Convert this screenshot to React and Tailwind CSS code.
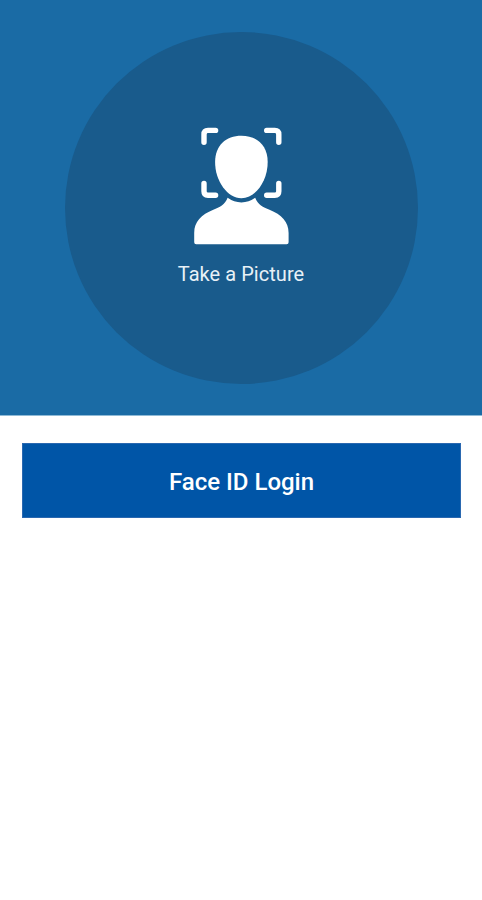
import React from "react";

/* Person silhouette inside four scan corners. */
function FaceScanIcon({ className }) {
  return (
    <svg viewBox="0 0 96 118" className={className} fill="currentColor" aria-hidden="true">
      <g fill="none" stroke="currentColor" strokeWidth="5.4" strokeLinecap="round" strokeLinejoin="round">
        <path d="M11 15.3V7.4Q11 3.4 15 3.4H22.6" />
        <path d="M73.7 3.4H81.8Q85.8 3.4 85.8 7.4V15.3" />
        <path d="M11 56.4V64.3Q11 68.3 15 68.3H22.6" />
        <path d="M73.7 68.3H81.8Q85.8 68.3 85.8 64.3V56.4" />
      </g>
      <path d="M48.4 8.7C64 8.7 74.7 18.5 74.7 35C74.7 54 62.5 71.2 48.4 71.2C34.3 71.2 22.1 54 22.1 35C22.1 18.5 32.8 8.7 48.4 8.7Z" />
      <path d="M34.6 70.8Q41 75.4 48.4 75.4Q55.8 75.4 62.2 70.8C65 78 70 80.2 76.5 82.8C88.5 87.8 95.6 94.5 95.6 106V115.3Q95.6 117.3 93.6 117.3H3.2Q1.2 117.3 1.2 115.3V106C1.2 94.5 8.3 87.8 20.3 82.8C26.8 80.2 31.8 78 34.6 70.8Z" />
    </svg>
  );
}

export default function App() {
  return (
    <div className="min-h-screen bg-white font-['Roboto',sans-serif]">
      <div className="flex h-[416px] justify-center border-b border-[#8fbad6] bg-[#1a6ba5] pt-8">
        <button className="flex h-[352px] w-[353px] flex-col items-center rounded-full bg-[#195b8c] pt-[95px] text-white">
          <FaceScanIcon className="h-[118px] w-24 shrink-0" />
          <span className="mt-[15px] text-xl leading-7 tracking-[0.04px] text-[#e8f1f7]">Take a Picture</span>
        </button>
      </div>

      <div className="px-[22px] pt-[27px]">
        <button className="flex h-[75px] w-[439px] items-center justify-center border border-[#2a68b0] bg-[#0055a7] pt-0.5 text-2xl font-medium text-white">
          Face ID Login
        </button>
      </div>
    </div>
  );
}
